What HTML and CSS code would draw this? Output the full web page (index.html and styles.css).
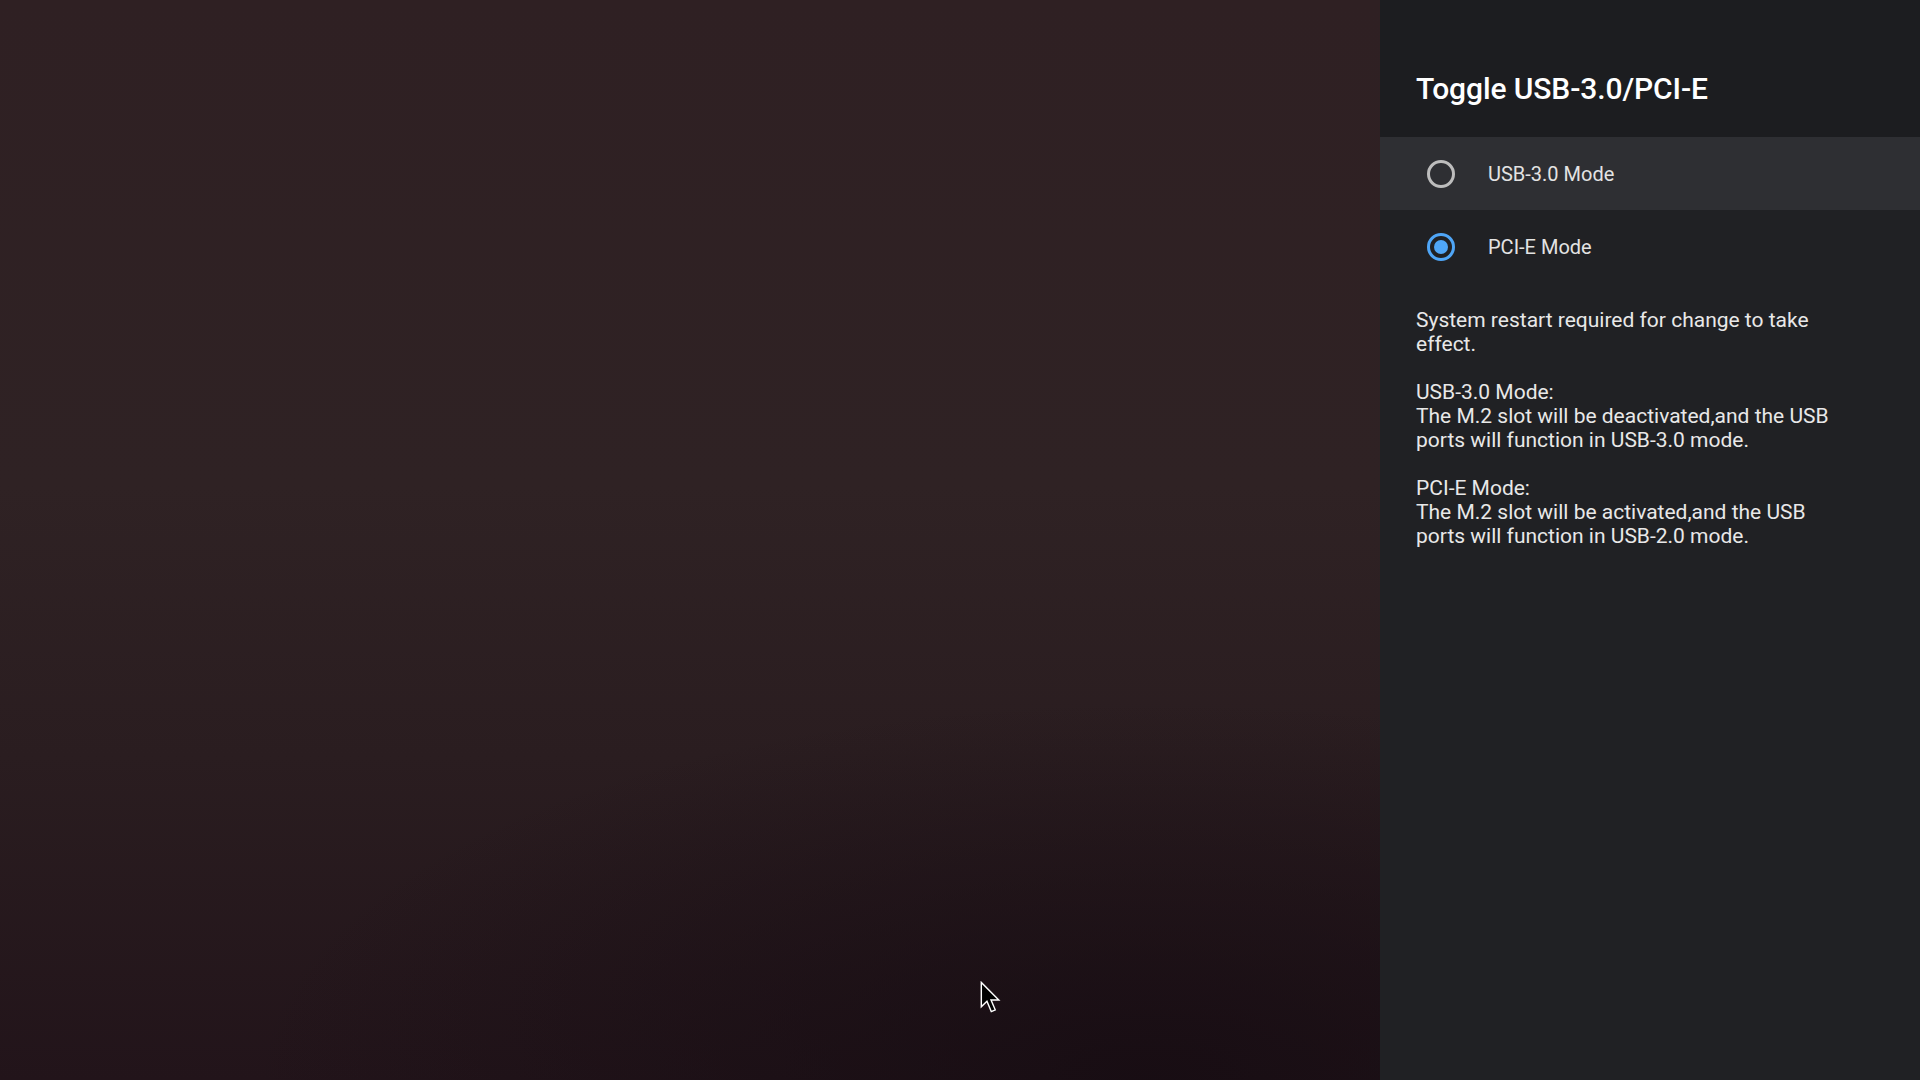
FILE: index.html
```html
<!DOCTYPE html>
<html lang="en">
<head>
<meta charset="utf-8">
<title>Toggle USB-3.0/PCI-E</title>
<link rel="stylesheet" href="styles.css">
</head>
<body>
<div class="screen">
  <div class="wallpaper"></div>
  <aside class="panel">
    <header class="panel-header">
      <h1 class="title">Toggle USB-3.0/PCI-E</h1>
    </header>
    <div class="options">
      <div class="option focused">
        <span class="radio"></span>
        <span class="label">USB-3.0 Mode</span>
      </div>
      <div class="option">
        <span class="radio checked"></span>
        <span class="label">PCI-E Mode</span>
      </div>
    </div>
    <p class="desc">System restart required for change to take<br>effect.<br><br>USB-3.0 Mode:<br>The M.2 slot will be deactivated,and the USB<br>ports will function in USB-3.0 mode.<br><br>PCI-E Mode:<br>The M.2 slot will be activated,and the USB<br>ports will function in USB-2.0 mode.</p>
  </aside>
  <svg class="cursor" width="21" height="33" viewBox="0 0 16 25">
    <path d="M1 1 L1 19.5 L5.3 15.3 L8.6 23.2 L11.6 21.9 L8.4 14.4 L14.3 14.4 Z" fill="#000" stroke="#fff" stroke-width="1.1" stroke-linejoin="miter"/>
  </svg>
</div>
</body>
</html>
```
FILE: styles.css
```css
* { box-sizing: border-box; }
html, body {
  margin: 0;
  padding: 0;
  width: 1920px;
  height: 1080px;
  overflow: hidden;
  background: #000;
}
.screen {
  position: relative;
  display: flex;
  width: 1920px;
  height: 1080px;
  font-family: Roboto, "Noto Sans", "Liberation Sans", sans-serif;
}
.wallpaper {
  flex: 1;
  background:
    radial-gradient(ellipse 900px 380px at 1150px 1080px, rgba(22,12,18,0.85), rgba(22,12,18,0) 100%),
    linear-gradient(to bottom, #2f2023 0%, #2f2224 45%, #2a1d20 70%, #22141a 100%);
}
.panel {
  width: 540px;
  background: #202124;
  display: flex;
  flex-direction: column;
}
.panel-header {
  height: 137px;
  background: #1c1d20;
  padding: 71px 0 0 36px;
}
.title {
  margin: 0;
  font-size: 30px;
  line-height: 36px;
  font-weight: 500;
  color: #ffffff;
  letter-spacing: -0.1px;
}
.options {
  display: flex;
  flex-direction: column;
}
.option {
  height: 73px;
  display: flex;
  align-items: center;
  padding-left: 47px;
  gap: 33px;
}
.option.focused {
  background: #2e2f33;
}
.radio {
  width: 28px;
  height: 28px;
  border-radius: 50%;
  border: 3px solid #bdbdbd;
  display: flex;
  align-items: center;
  justify-content: center;
  flex: none;
}
.radio.checked {
  border-color: #4fa6f7;
}
.radio.checked::after {
  content: "";
  width: 14px;
  height: 14px;
  border-radius: 50%;
  background: #4fa6f7;
}
.label {
  font-size: 20px;
  color: #e3e3e3;
  line-height: 24px;
}
.desc {
  margin: 25px 0 0 0;
  padding: 0 36px;
  font-size: 21px;
  line-height: 24px;
  color: #e8e8e8;
}
.cursor {
  position: absolute;
  left: 980px;
  top: 981px;
}
```
